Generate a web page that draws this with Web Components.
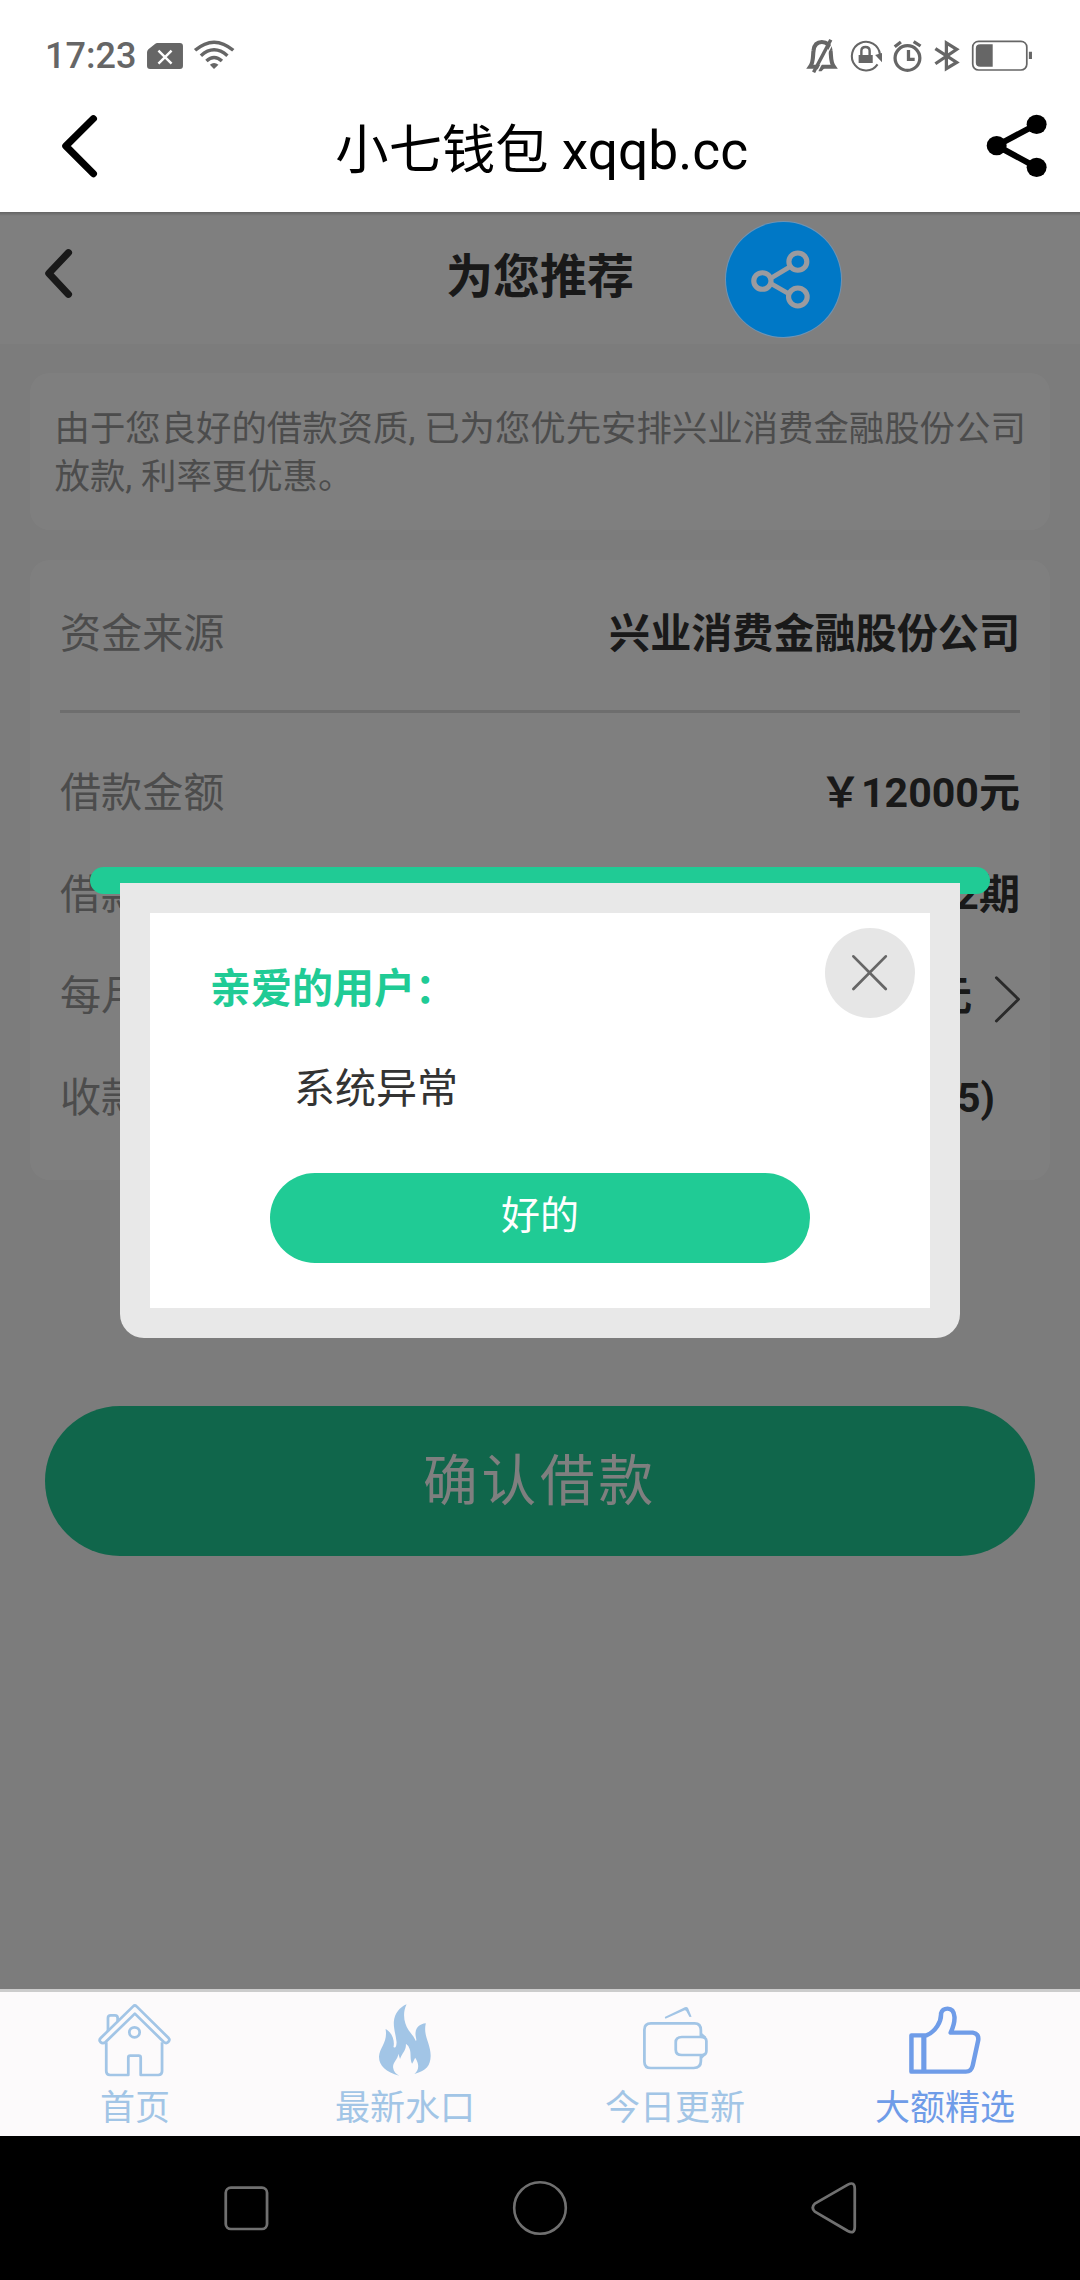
<!DOCTYPE html>
<html lang="zh-CN">
<head>
<meta charset="utf-8">
<title>小七钱包 xqqb.cc</title>
<style>
html,body{margin:0;padding:0}
body{width:1080px;height:2280px;overflow:hidden;background:#fff;font-family:Roboto,"Noto Sans CJK SC",sans-serif;color:#333}
</style>
</head>
<body>
<phone-screen></phone-screen>
<script>
// name: [viewBox, width, height, markup]
const ICONS = {
  sim: ['424 126 110 84', 38, 28, '<path fill="currentColor" d="M457 129H522Q531 129 531 138V198Q531 207 522 207H436Q427 207 427 198V157Q427 152 431 148L450 132Q453 129 457 129Z"/><path stroke="#fff" stroke-width="7" d="M460 152L498 191M498 152L460 191"/>'],
  wifi: ['560 115 122 93', 42, 31, '<g fill="none" stroke="currentColor" stroke-width="10"><path d="M566 149Q621 100 677 149"/><path d="M583 165Q621 130 660 165"/><path d="M599 181Q621 160 644 181"/></g><path fill="currentColor" d="M609 192Q621 182 634 192L621 205Z"/>'],
  bell: ['775 110 92 106', 31.7, 35.3, '<path fill="none" stroke="currentColor" stroke-width="12" d="M787 196C798 180 794 165 797 147Q800 122 821 122Q843 122 846 147C849 165 845 180 856 196Z"/><path fill="currentColor" d="M806 200H829L820 210H812Z"/><path stroke="#fff" stroke-width="4" d="M805 216L856 119"/><path stroke="currentColor" stroke-width="10" d="M797 213L847 115"/>'],
  rotate: ['898 114 98 101', 33.7, 33.7, '<path fill="none" stroke="currentColor" stroke-width="6" d="M988 160A41 43 0 1 0 981 190"/><path fill="currentColor" d="M974 162L994 156V184ZM926 162H967V186H926Z"/><path fill="none" stroke="currentColor" stroke-width="7" d="M934 163V149Q934 138 946 138Q958 138 958 149V163"/>'],
  alarm: ['1026 114 86 101', 29.6, 33.7, '<g fill="none" stroke="currentColor" stroke-width="9.5"><ellipse cx="1068" cy="171" rx="36" ry="37"/><path d="M1071 147V175H1089M1031 137L1049 123M1086 122L1106 135"/></g>'],
  bluetooth: ['1143 114 76 101', 26.2, 33.7, '<path fill="none" stroke="currentColor" stroke-width="9.5" d="M1147 143L1209 184L1179 203V126L1209 145L1147 188"/>'],
  battery: ['1252 118 180 94', 62, 31.3, '<rect x="1257" y="122" width="157" height="86" rx="17" fill="none" stroke="currentColor" stroke-width="5"/><path fill="currentColor" d="M1315 131V198H1279Q1266 198 1266 186V143Q1266 131 1279 131ZM1420 153H1429V175H1420Z"/>'],
  back: ['178 341 108 192', 37.2, 64, '<path fill="none" stroke="currentColor" stroke-width="21" stroke-linecap="round" stroke-linejoin="round" d="M272 355L192 437L272 520"/>'],
  backSmall: ['128 144 86 154', 29.6, 51.3, '<path fill="none" stroke="currentColor" stroke-width="21" stroke-linecap="round" stroke-linejoin="round" d="M199 158L142 220L199 283"/>'],
  share: ['1296 342 178 192', 61.3, 64, '<path fill="none" stroke="currentColor" stroke-width="18" d="M1443 373L1327 437L1443 502"/><g fill="currentColor"><circle cx="1327" cy="437" r="29"/><circle cx="1443" cy="373" r="29"/><circle cx="1443" cy="502" r="29"/></g>'],
  shareRing: ['610 146 176 184', 60.6, 61.3, '<g fill="none" stroke="currentColor"><g stroke-width="15"><circle cx="646" cy="242" r="25"/><circle cx="749" cy="184" r="26"/><circle cx="749" cy="290" r="27"/></g><path stroke-width="14" d="M668 235L725 200M668 248L725 282"/></g>'],
  next: ['1320 406 78 144', 26.9, 48, '<path fill="none" stroke="currentColor" stroke-width="8.5" stroke-linecap="round" stroke-linejoin="round" d="M1327 414L1391 479L1327 544"/>'],
  close: ['904 342 108 112', 37.2, 37.3, '<path fill="none" stroke="currentColor" stroke-width="8" stroke-linecap="round" d="M911 349L1005 447M1005 349L911 447"/>'],
  home: ['286 98 214 222', 73.7, 74, '<g fill="none" stroke="currentColor" stroke-width="8" stroke-linejoin="round"><path d="M294 203L388 108Q393 103 398 108L491 203Q496 209 490 215Q484 221 477 215L393 130L308 215Q300 222 293 215Q288 209 294 203Z"/><path d="M315 183V143Q315 135 323 135H335Q343 135 343 143V154"/><path d="M310 216V303Q310 314 321 314H374V262Q374 256 380 256H404Q410 256 410 262V314H461Q472 314 472 303V216"/><circle cx="392" cy="186" r="15"/></g>'],
  fire: ['1098 98 156 222', 53.7, 74, '<path fill="currentColor" d="M1160 316C1120 305 1100 285 1101 258C1103 232 1127 215 1120 176C1140 187 1147 212 1143 230Q1151 237 1152 216C1150 195 1143 175 1144 155C1146 130 1160 112 1181 102C1168 130 1174 160 1187 180C1198 195 1203 200 1208 212C1212 208 1206 200 1207 187C1209 170 1220 161 1237 159C1228 197 1252 220 1251 258C1250 285 1240 301 1204 311C1217 300 1219 282 1206 262C1203 268 1201 274 1197 280C1190 266 1195 250 1190 236Q1186 224 1179 220C1181 240 1168 248 1162 266L1157 250C1156 268 1140 275 1142 292C1143 303 1150 310 1160 316Z"/>'],
  wallet: ['296 98 194 222', 66.8, 74, '<g fill="none" stroke="currentColor" stroke-width="8" stroke-linejoin="round"><path d="M467 197V180Q467 159 449 159H322Q303 159 303 178V274Q303 293 322 293H446Q467 293 467 272V256"/><path d="M412 200H466Q483 200 483 212V242Q483 254 470 254H412Q394 254 394 238V216Q394 200 412 200Z"/><path d="M468 192L480 202M468 262L480 250"/></g><path fill="currentColor" d="M362 140L416 113Q426 107 430 114L440 139L434 140L424 121L420 120L364 145Z"/>'],
  thumb: ['1070 98 216 222', 74.4, 74, '<g fill="none" stroke="currentColor" stroke-width="13" stroke-linejoin="round"><path d="M1080 195H1124C1150 183 1167 155 1166 129Q1170 115 1185 115Q1203 115 1205 140Q1206 160 1194 187H1258Q1276 190 1274 209L1258 285Q1254 304 1238 304H1080Z"/><path d="M1116 197V304" stroke-width="15"/></g>'],
  recents: ['646 644 136 140', 46.8, 46.7, '<rect x="654" y="652" width="120" height="124" rx="15" fill="none" stroke="currentColor" stroke-width="8"/>'],
  circle: ['0 0 56 56', 56, 56, '<circle cx="28" cy="28" r="25.8" fill="none" stroke="currentColor" stroke-width="2.6"/>'],
  triangle: ['784 632 138 162', 47.5, 54, '<path fill="none" stroke="currentColor" stroke-width="8" stroke-linejoin="round" d="M914 655V770Q914 793 894 782L798 724Q786 712 798 700L894 643Q914 632 914 655Z"/>']
};

function define(name, html) {
  const t = document.createElement('template');
  t.innerHTML = html;
  customElements.define(name, class extends HTMLElement {
    constructor() {
      super();
      this.attachShadow({mode: 'open'}).append(t.content.cloneNode(true));
    }
  });
}

customElements.define('ui-icon', class extends HTMLElement {
  connectedCallback() {
    if (this.shadowRoot) return;
    const [box, w, h, body] = ICONS[this.getAttribute('name')];
    this.attachShadow({mode: 'open'}).innerHTML =
      `<style>:host{display:block;flex:none;line-height:0}svg{display:block}</style>
       <svg viewBox="${box}" width="${w}" height="${h}" preserveAspectRatio="none">${body}</svg>`;
  }
});

define('status-bar', `<style>
:host{display:flex;align-items:center;height:110px;box-sizing:border-box;color:#666;padding:2px 47px 0 45px}
time{font-size:36px;font-weight:500;line-height:42px;width:101px}
.left,.right{display:flex;align-items:center}
.right{margin-left:auto;gap:11px;margin-top:-1px}
.left ui-icon+ui-icon{margin-left:9px;margin-top:-3px}
</style><div class="left"><time>17:23</time><ui-icon name="sim"></ui-icon><ui-icon name="wifi"></ui-icon></div>
<div class="right"><ui-icon name="bell"></ui-icon><ui-icon name="rotate"></ui-icon><ui-icon name="alarm"></ui-icon><ui-icon name="bluetooth"></ui-icon><ui-icon name="battery"></ui-icon></div>`);

define('app-bar', `<style>
:host{display:flex;align-items:center;justify-content:space-between;height:102px;box-sizing:border-box;padding:0 32.5px 30px 61px;color:#000}
.title{font-size:53.3px;line-height:64px;white-space:nowrap;margin-top:9px;margin-right:1px}
</style><ui-icon name="back"></ui-icon><div class="title"><slot></slot></div><ui-icon name="share"></ui-icon>`);

define('page-header', `<style>
:host{display:grid;grid-template-columns:1fr auto 1fr;align-items:center;height:132px;background:#fff;box-sizing:border-box;padding:0 44px 7px}
h1{margin:5px 0 0;font-size:47px;line-height:60px;font-weight:700}
ui-icon{margin-top:-1px}
</style><ui-icon name="backSmall"></ui-icon><h1><slot></slot></h1>`);

define('info-card', `<style>
:host{display:block;background:#fff;border-radius:20px;box-sizing:border-box}
</style><slot></slot>`);

define('info-row', `<style>
:host{display:flex;align-items:center;justify-content:space-between;height:var(--row,101.8px);font-size:41.1px;line-height:48px;white-space:nowrap}
.label{color:#999}
.value{display:flex;align-items:center;font-weight:700;margin-right:var(--inset,0)}
</style><span class="label"><slot name="label"></slot></span><span class="value"><slot></slot></span>`);

define('confirm-button', `<style>
:host{display:flex;align-items:center;justify-content:center;height:150px;border-radius:75px;background:#20cc96;color:#fff;font-size:54.6px;letter-spacing:3.9px;line-height:64px;box-sizing:border-box}
</style><slot></slot>`);

define('share-fab', `<style>
:host{position:absolute;left:725.5px;top:10px;width:115px;height:115px;border-radius:50%;background:#0078c6;color:#9b9b9f;display:flex;align-items:center;justify-content:center;box-shadow:0 0 0 1px #6f94b5}
ui-icon{margin-right:6px}
</style><ui-icon name="shareRing"></ui-icon>`);

define('alert-dialog', `<style>
:host{position:absolute;inset:0;background:rgba(0,0,0,.5)}
.box{width:900px;margin:655px auto 0}
.bar{height:27px;border-radius:13.5px;background:#20cb95;margin-bottom:-11px}
.frame{position:relative;width:840px;height:455px;margin:0 auto;box-sizing:border-box;padding:30px 30px 30px;background:#e8e8e8;border-radius:0 0 24px 24px}
.body{display:flex;flex-direction:column;height:395px;background:#fff;box-sizing:border-box;padding:52px 60px 0}
h2{margin:0;font-size:41px;line-height:48px;font-weight:700;color:#20cb95}
p{margin:52px 0 0 84px;font-size:41px;line-height:48px;color:#333}
button{display:block;margin:60px auto 0;width:540px;height:90px;padding:0 0 4px;border:0;border-radius:45px;background:#20cb95;color:#fff;font:400 39px/46px Roboto,"Noto Sans CJK SC",sans-serif}
.close{position:absolute;right:45px;top:44.5px;width:90px;height:90px;border-radius:50%;background:#e6e6e6;color:#666;display:flex;align-items:center;justify-content:center}
</style><div class="box"><div class="bar"></div><div class="frame"><div class="body">
<h2><slot name="title"></slot></h2><p><slot></slot></p><button><slot name="action"></slot></button></div>
<div class="close"><ui-icon name="close"></ui-icon></div></div></div>`);

define('web-view', `<style>
:host{display:block;position:relative;height:1777px;background:#f8f8f8;overflow:hidden}
.content{display:flex;flex-direction:column;padding:29px 30px 0}
.tip{height:157px;padding:32px 24.5px 0;font-size:35.4px;line-height:48.3px;color:#999;white-space:nowrap}
.detail{margin-top:30px;height:620px;padding:21px 30px 0}
.first{--row:105px}
hr{margin:24px 0 29px;border:0;height:3px;background:#dcdcdc}
.arrow{--inset:-1px}
.arrow ui-icon{margin-left:22px;margin-top:5px;color:#555}
.card-no{--inset:25px}
confirm-button{margin:226px 15px 0}
.edge{position:absolute;inset:0 0 auto;height:4px;background:linear-gradient(rgba(0,0,0,.22),rgba(0,0,0,0))}
</style>
<page-header>为您推荐</page-header>
<div class="content">
<info-card class="tip">由于您良好的借款资质, 已为您优先安排兴业消费金融股份公司<br>放款, 利率更优惠。</info-card>
<info-card class="detail">
<info-row class="first"><span slot="label">资金来源</span>兴业消费金融股份公司</info-row>
<hr>
<info-row><span slot="label">借款金额</span>￥12000元</info-row>
<info-row><span slot="label">借款</span>12期</info-row>
<info-row class="arrow"><span slot="label">每月</span>元<ui-icon name="next"></ui-icon></info-row>
<info-row class="card-no"><span slot="label">收款</span>5)</info-row>
</info-card>
<confirm-button>确认借款</confirm-button>
</div>
<alert-dialog><span slot="title">亲爱的用户：</span>系统异常<span slot="action">好的</span></alert-dialog>
<share-fab></share-fab><div class="edge"></div>`);

define('tab-item', `<style>
:host{flex:1;display:flex;flex-direction:column;align-items:center;color:#a2c5e6;padding-top:11px}
:host([active]){color:#6f9ce8}
span{font-size:35px;line-height:42px;margin-top:11px}
</style><slot name="icon"></slot><span><slot></slot></span>`);

define('tab-bar', `<style>
:host{display:flex;height:147px;box-sizing:border-box;border-top:3px solid #ccc;background:#fcfafb}
</style><slot></slot>`);

define('system-nav', `<style>
:host{display:flex;align-items:center;justify-content:space-between;height:144px;box-sizing:border-box;padding:0 222px 0 222.5px;background:#000;color:#707070}
</style><ui-icon name="recents"></ui-icon><ui-icon name="circle"></ui-icon><ui-icon name="triangle"></ui-icon>`);

define('phone-screen', `<style>
:host{display:flex;flex-direction:column;width:1080px;height:2280px}
</style>
<status-bar></status-bar>
<app-bar>小七钱包 xqqb.cc</app-bar>
<web-view></web-view>
<tab-bar>
<tab-item><ui-icon slot="icon" name="home"></ui-icon>首页</tab-item>
<tab-item><ui-icon slot="icon" name="fire"></ui-icon>最新水口</tab-item>
<tab-item><ui-icon slot="icon" name="wallet"></ui-icon>今日更新</tab-item>
<tab-item active><ui-icon slot="icon" name="thumb"></ui-icon>大额精选</tab-item>
</tab-bar>
<system-nav></system-nav>`);
</script>
</body>
</html>
